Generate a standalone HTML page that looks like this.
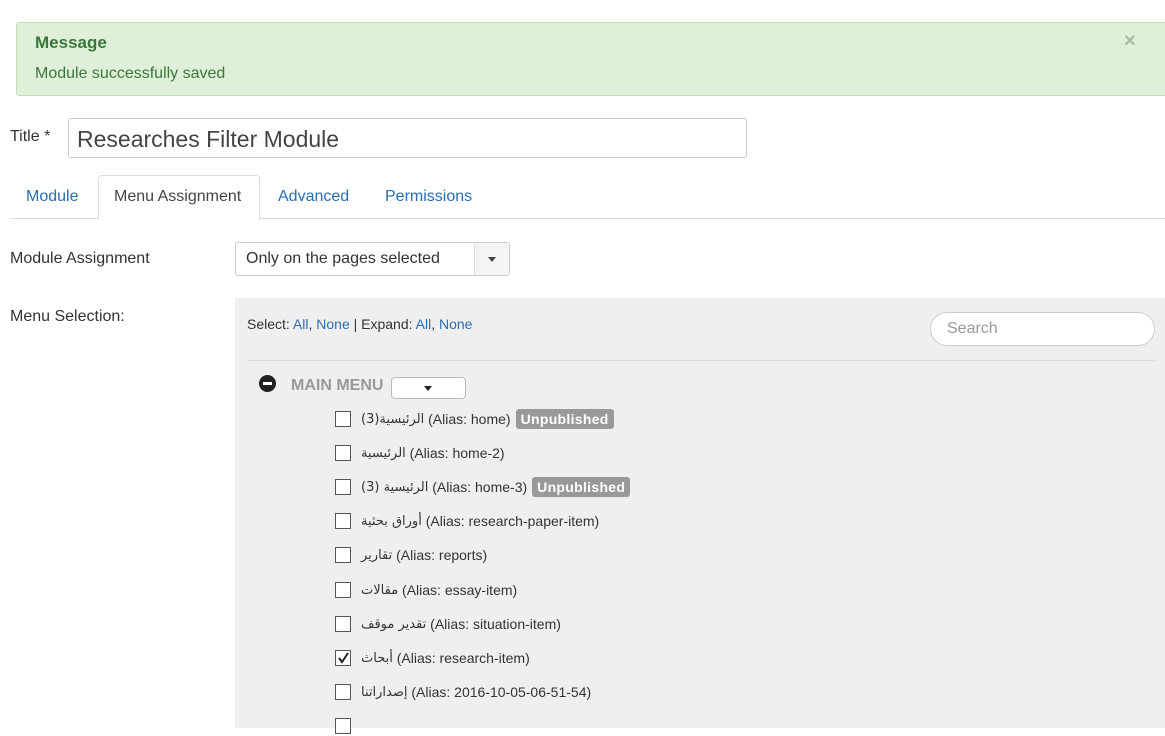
<!DOCTYPE html>
<html><head><meta charset="utf-8"><style>
*{box-sizing:border-box}
body{margin:0;width:1165px;height:721px;overflow:hidden;background:#fff;font-family:"Liberation Sans","DejaVu Sans",sans-serif;color:#333;font-size:16px}
.a{position:absolute}
.link{color:#2a6eb0}
.row{position:absolute;left:335px;height:20px;display:flex;align-items:center;font-size:14px;color:#333}
.cb{width:16px;height:16px;border:1px solid #555;background:#fff;margin-right:10px;position:relative}
.badge{background:#999;color:#fff;font-weight:bold;font-size:14px;padding:2px 5px;border-radius:3px;margin-left:5px;letter-spacing:.3px}
.ar{font-family:"DejaVu Sans",sans-serif;font-size:13px}
</style></head><body>
<div class="a" style="left:16px;top:22px;width:1149px;height:74px;background:#dff0d8;border:1px solid #c3e0b5;border-right:none;border-radius:3px 0 0 3px"></div>
<div class="a" style="left:35px;top:33px;font-weight:bold;font-size:17px;color:#3c763d">Message</div>
<div class="a" style="left:35px;top:65px;font-size:16px;color:#3c763d">Module successfully saved</div>
<div class="a" style="left:1124px;top:30px;font-size:20px;font-weight:bold;color:#a8bca5">×</div>
<div class="a" style="left:10px;top:128px;font-size:16px">Title *</div>
<div class="a" style="left:68px;top:118px;width:679px;height:40px;border:1px solid #ccc;border-radius:3px;padding:7px 8px;font-size:23px;color:#444">Researches Filter Module</div>
<div class="a" style="left:10px;top:218px;width:1155px;border-top:1px solid #ddd"></div>
<div class="a link" style="left:26px;top:188px">Module</div>
<div class="a" style="left:98px;top:175px;width:162px;height:45px;border:1px solid #ddd;border-bottom:none;border-radius:4px 4px 0 0;background:#fff"></div>
<div class="a" style="left:114px;top:188px;color:#444">Menu Assignment</div>
<div class="a link" style="left:278px;top:188px">Advanced</div>
<div class="a link" style="left:385px;top:188px">Permissions</div>
<div class="a" style="left:10px;top:250px">Module Assignment</div>
<div class="a" style="left:235px;top:242px;width:275px;height:34px;border:1px solid #ccc;border-radius:3px;background:#fff"></div>
<div class="a" style="left:474px;top:243px;width:35px;height:32px;border-left:1px solid #ddd;background:#f4f4f4"></div>
<div class="a" style="left:488px;top:257px;border:4px solid transparent;border-top:5px solid #444"></div>
<div class="a" style="left:246px;top:250px">Only on the pages selected</div>
<div class="a" style="left:10px;top:308px">Menu Selection:</div>
<div class="a" style="left:235px;top:298px;width:930px;height:430px;background:#efefef"></div>
<div class="a" style="left:247px;top:316px;font-size:14px">Select: <span class="link">All</span>, <span class="link">None</span> | Expand: <span class="link">All</span>, <span class="link">None</span></div>
<div class="a" style="left:930px;top:312px;width:225px;height:34px;border:1px solid #ccc;border-radius:17px;background:#fff;padding:7px 16px;color:#999">Search</div>
<div class="a" style="left:247px;top:360px;width:908px;border-top:1px solid #ddd"></div>
<div class="a" style="left:259px;top:375px;width:17px;height:17px;border-radius:50%;background:#222"></div>
<div class="a" style="left:263px;top:382px;width:9px;height:3px;background:#fff"></div>
<div class="a" style="left:291px;top:377px;font-weight:bold;color:#999;font-size:16px">MAIN MENU</div>
<div class="a" style="left:391px;top:377px;width:75px;height:22px;border:1px solid #bbb;border-radius:4px;background:#fff"></div>
<div class="a" style="left:424px;top:386px;border:4px solid transparent;border-top:5px solid #222"></div>
<div class="row" style="top:409px"><span class="cb"></span><span class="ar">الرئيسية(3)</span>&nbsp;(Alias: home)<span class="badge">Unpublished</span></div>
<div class="row" style="top:443px"><span class="cb"></span><span class="ar">الرئيسية</span>&nbsp;(Alias: home-2)</div>
<div class="row" style="top:477px"><span class="cb"></span><span class="ar">الرئيسية (3)</span>&nbsp;(Alias: home-3)<span class="badge">Unpublished</span></div>
<div class="row" style="top:511px"><span class="cb"></span><span class="ar">أوراق بحثية</span>&nbsp;(Alias: research-paper-item)</div>
<div class="row" style="top:545px"><span class="cb"></span><span class="ar">تقارير</span>&nbsp;(Alias: reports)</div>
<div class="row" style="top:580px"><span class="cb"></span><span class="ar">مقالات</span>&nbsp;(Alias: essay-item)</div>
<div class="row" style="top:614px"><span class="cb"></span><span class="ar">تقدير موقف</span>&nbsp;(Alias: situation-item)</div>
<div class="row" style="top:648px"><span class="cb"><svg width="14" height="14" style="position:absolute;left:0;top:0"><path d="M3 7 L6 11 L12 2" fill="none" stroke="#222" stroke-width="2"/></svg></span><span class="ar">أبحاث</span>&nbsp;(Alias: research-item)</div>
<div class="row" style="top:682px"><span class="cb"></span><span class="ar">إصداراتنا</span>&nbsp;(Alias: 2016-10-05-06-51-54)</div>
<div class="row" style="top:716px"><span class="cb"></span></div>
</body></html>
